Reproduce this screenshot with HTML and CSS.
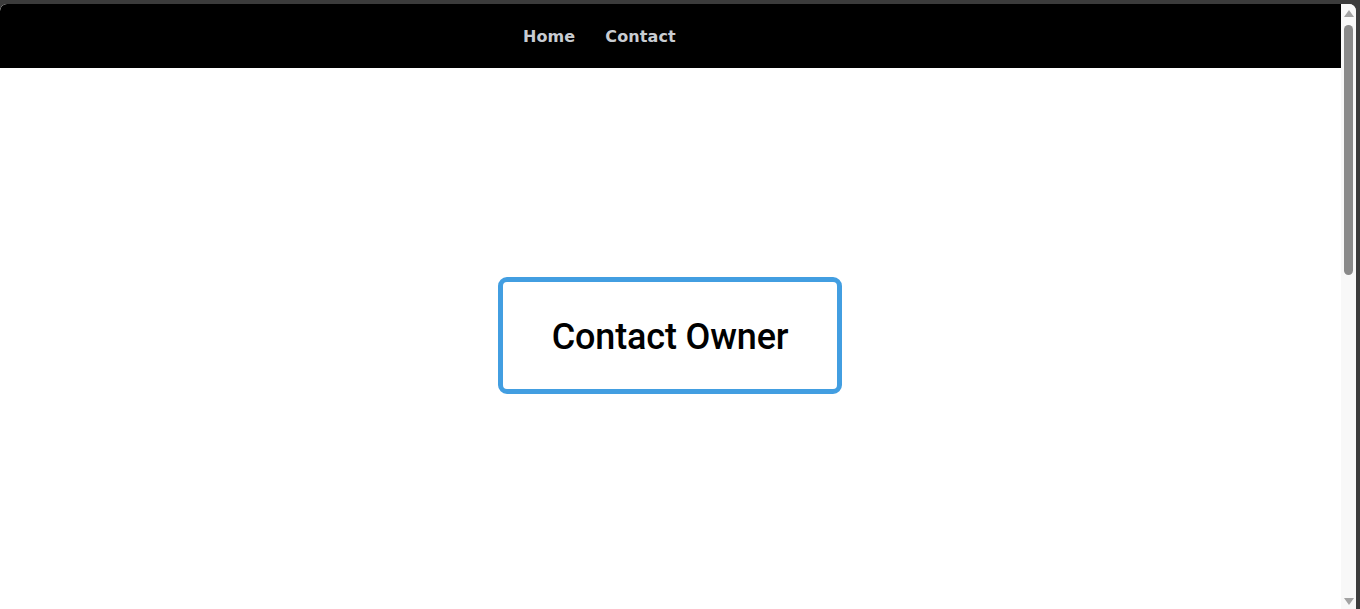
FILE: index.html
```html
<!DOCTYPE html>
<html lang="en">
<head>
<meta charset="utf-8">
<title>Contact Owner</title>
<link rel="stylesheet" href="styles.css">
</head>
<body>
<div class="frame">
  <div class="window">
    <div class="page">
      <nav class="topnav">
        <a class="nav-link" href="#">Home</a>
        <a class="nav-link" href="#">Contact</a>
      </nav>
      <main class="content">
        <button class="contact-btn" type="button">Contact Owner</button>
      </main>
    </div>
    <div class="scrollbar">
      <div class="arrow arrow-up"></div>
      <div class="track"><div class="thumb"></div></div>
      <div class="arrow arrow-down"></div>
    </div>
  </div>
</div>
</body>
</html>
```

FILE: styles.css
```css
html, body {
  margin: 0;
  padding: 0;
  height: 609px;
  overflow: hidden;
  background: #3b3b3b;
}

.frame {
  box-sizing: border-box;
  height: 609px;
  padding: 4px 4px 0 0;
}

.window {
  display: flex;
  height: 605px;
  background: #ffffff;
  border-radius: 7px 7px 0 0;
  overflow: hidden;
}

.page {
  flex: 1;
  display: flex;
  flex-direction: column;
  background: #ffffff;
}

.topnav {
  height: 64px;
  background: #000000;
  display: flex;
  align-items: center;
  gap: 30px;
  padding-left: 523px;
}

.nav-link {
  font-family: "DejaVu Sans", sans-serif;
  font-weight: bold;
  font-size: 16px;
  color: #c8ccd2;
  text-decoration: none;
  letter-spacing: 0.1px;
}

.content {
  display: flex;
  justify-content: center;
  padding-top: 209px;
}

.contact-btn {
  box-sizing: border-box;
  width: 344px;
  height: 117px;
  margin-left: -1px;
  border: 5px solid #429ee1;
  border-radius: 9px;
  background: #ffffff;
  color: #000000;
  font-family: Roboto, "Liberation Sans", sans-serif;
  font-weight: 500;
  font-size: 36px;
  letter-spacing: -0.15px;
  line-height: 40px;
  padding: 2px 0 0;
  cursor: pointer;
}

.scrollbar {
  width: 15px;
  display: flex;
  flex-direction: column;
  align-items: center;
  background: #f8f8f8;
}

.arrow {
  width: 0;
  height: 0;
  border-left: 5px solid transparent;
  border-right: 5px solid transparent;
}

.arrow-up {
  margin-top: 6px;
  border-bottom: 7px solid #a3a3a3;
}

.arrow-down {
  margin-bottom: 4px;
  border-top: 7px solid #a3a3a3;
}

.track {
  flex: 1;
  width: 100%;
  display: flex;
  justify-content: center;
  padding-top: 8px;
}

.thumb {
  width: 9px;
  height: 250px;
  background: #8a8a8a;
  border-radius: 5px;
}
```
